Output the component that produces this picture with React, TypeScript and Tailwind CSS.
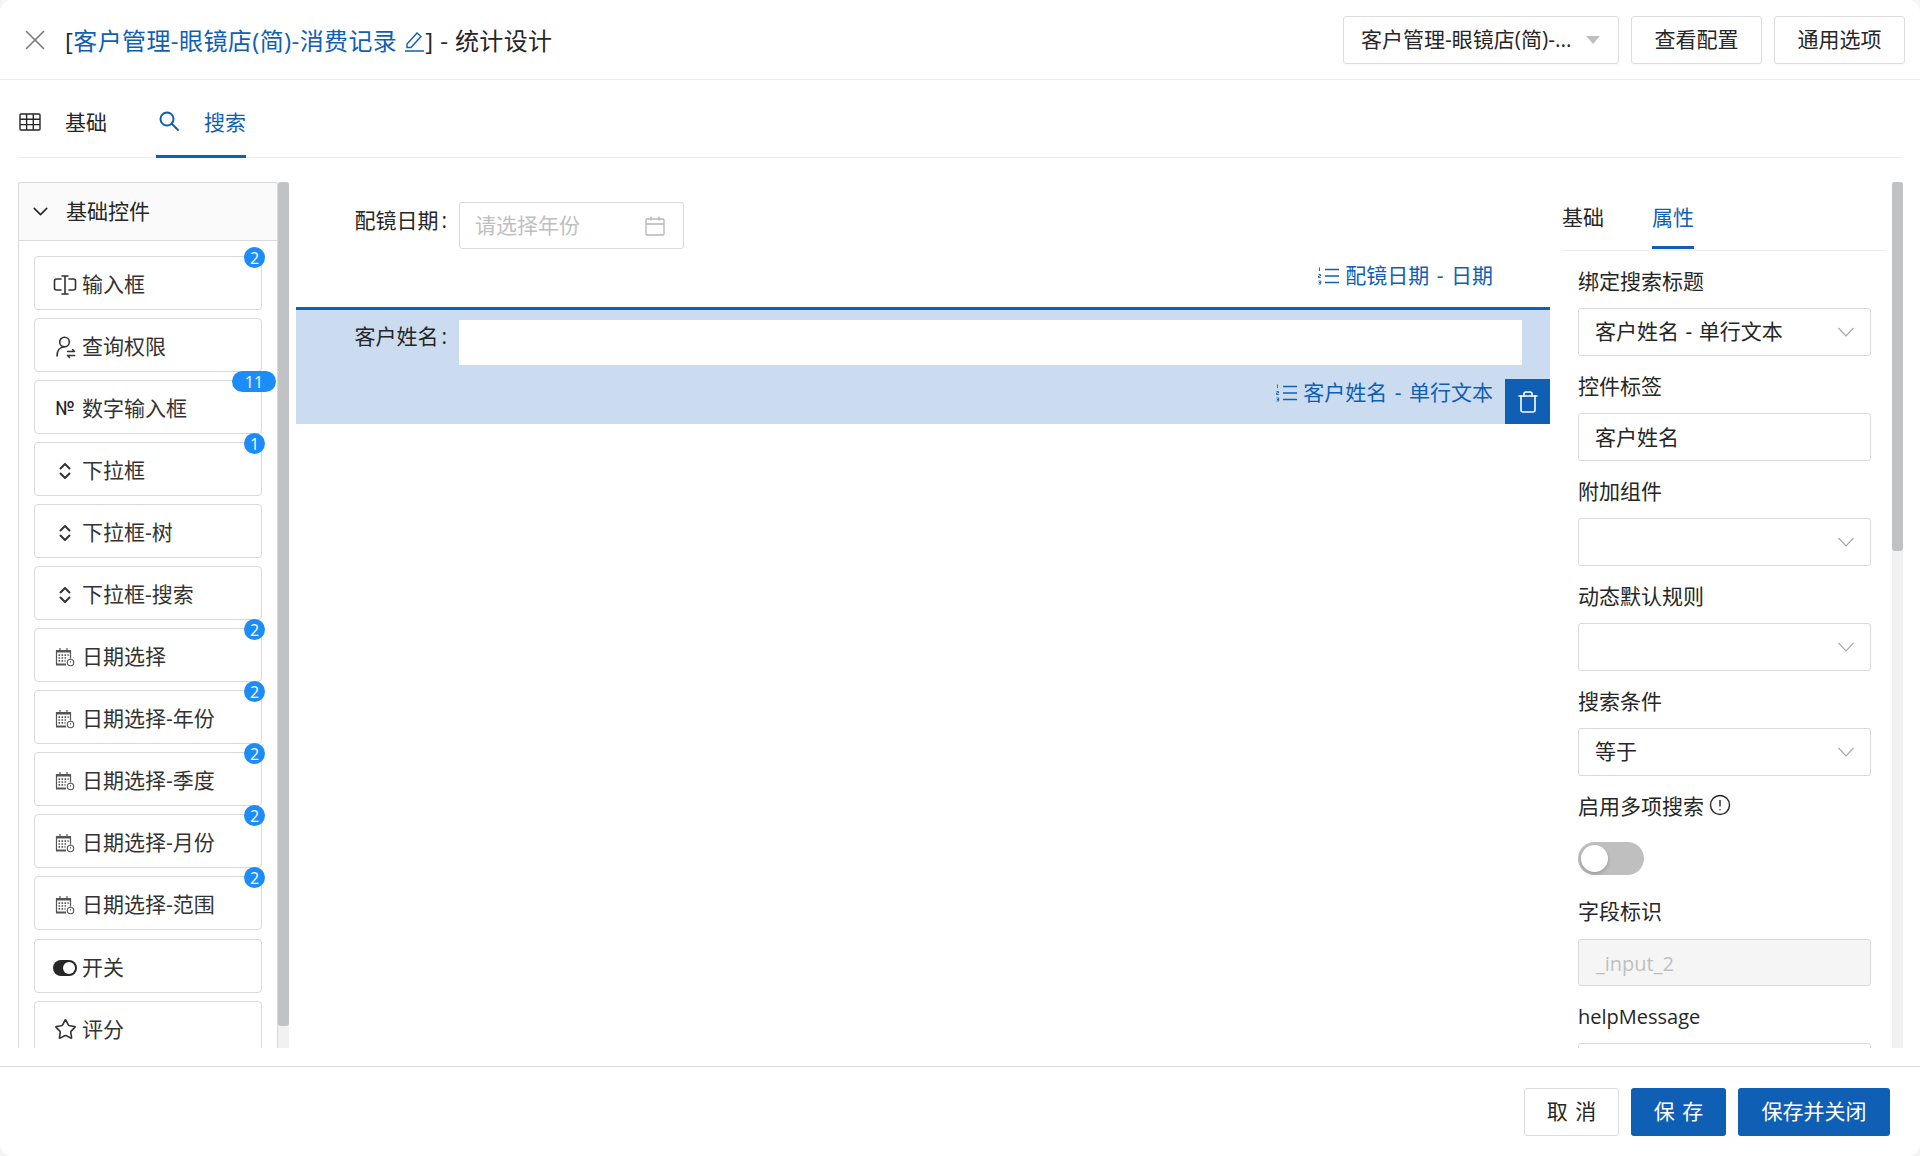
import React from "react";
import { ChevronDown, X, Star, Trash } from "lucide-react";

const Ic = ({ children, w = 24 }: { children: React.ReactNode; w?: number }) => (
  <svg width={w} height={24} viewBox="0 0 24 24" fill="none" stroke="currentColor" strokeWidth="1.6" strokeLinecap="round" strokeLinejoin="round">
    {children}
  </svg>
);

const InputIcon = () => (
  <Ic>
    <path d="M8 6H3.500a2 2 0 0 0-2 2v7a2 2 0 0 0 2 2H8" />
    <path d="M16 6h4.500a2 2 0 0 1 2 2v7a2 2 0 0 1-2 2H16" />
    <path d="M9 3h6M12 3v18M9 21h6" />
  </Ic>
);
const UserIcon = () => (
  <Ic>
    <circle cx="11.500" cy="7" r="4.800" />
    <path d="M4 21c0-5 2.500-9 7.500-9.300" />
    <path d="M14.500 16.500h7l-2-2M21.500 20.500h-7l2 2" strokeWidth="1.500" />
  </Ic>
);
const NoIcon = () => (
  <span className="w-[24px] text-center text-[18px] font-medium leading-[24px] text-[#262626] font-['Inter',sans-serif]">№</span>
);
const SortIcon = () => (
  <Ic>
    <path d="M7.500 9.500L12 5l4.500 4.500M7.500 14.500L12 19l4.500-4.500" strokeWidth="2" />
  </Ic>
);
const DateIcon = () => (
  <svg width={24} height={24} viewBox="0 0 24 24" fill="none" stroke="#555" strokeWidth="1.2">
    <path d="M3.500 19.500V5.500h14v8" />
    <path d="M3 5h15v2.500H3z" fill="#555" stroke="none" />
    <path d="M7 3v3M14 3v3" />
    <path d="M3 19.500h10" strokeWidth="2" />
    <path d="M5.500 10.200h1.600M8.500 10.200h1.600M11.500 10.200h1.600M14.500 10.200h1.200M5.500 13h1.600M8.500 13h1.600M11.500 13h1.600M5.500 15.800h1.600M8.500 15.800h1.600M11.500 15.800h1" strokeWidth="1.700" />
    <circle cx="17.500" cy="17.500" r="3.200" strokeWidth="1.100" fill="#fff" />
    <path d="M17.500 16v1.700" strokeWidth="0.900" />
  </svg>
);
const SwitchIcon = () => (
  <svg width={24} height={24} viewBox="0 0 24 24">
    <rect x="0" y="4" width="24" height="16" rx="8" fill="#262626" />
    <circle cx="16" cy="12" r="6" fill="#fff" />
  </svg>
);

type Item = { label: string; icon: React.ReactNode; badge?: string };
const items: Item[] = [
  { label: "输入框", icon: <InputIcon />, badge: "2" },
  { label: "查询权限", icon: <UserIcon /> },
  { label: "数字输入框", icon: <NoIcon />, badge: "11" },
  { label: "下拉框", icon: <SortIcon />, badge: "1" },
  { label: "下拉框-树", icon: <SortIcon /> },
  { label: "下拉框-搜索", icon: <SortIcon /> },
  { label: "日期选择", icon: <DateIcon />, badge: "2" },
  { label: "日期选择-年份", icon: <DateIcon />, badge: "2" },
  { label: "日期选择-季度", icon: <DateIcon />, badge: "2" },
  { label: "日期选择-月份", icon: <DateIcon />, badge: "2" },
  { label: "日期选择-范围", icon: <DateIcon />, badge: "2" },
  { label: "开关", icon: <SwitchIcon /> },
  { label: "评分", icon: <Star size={23} strokeWidth={1.7} /> },
];

const ListIcon = () => (
  <svg width={24} height={24} viewBox="0 0 24 24" fill="none" stroke="currentColor">
    <path d="M8 5.500h14M8 12h14M8 18.500h14" strokeWidth="1.600" />
    <path d="M2.500 3.500v3.500M1.500 10.500h2v1.500h-2v1.500h2.200M1.500 17h2.200v1.500H2h1.700V20H1.500" strokeWidth="0.900" />
  </svg>
);

const Label = ({ children }: { children: React.ReactNode }) => (
  <div className="flex h-[57px] items-center pt-[5px] text-[#262626]">{children}</div>
);
const Chevron = () => (
  <svg width={18} height={12} viewBox="0 0 18 12" fill="none" stroke="#a6a6a6" strokeWidth="1.100">
    <path d="M1.500 2l7.500 8 7.500-8" />
  </svg>
);
const SelectBox = ({ value }: { value?: string }) => (
  <div className="flex h-[48px] items-center justify-between rounded-[3px] border border-[#d9d9d9] pl-[16px] pr-[15px]">
    <span className="[word-spacing:1px]">{value}</span>
    <Chevron />
  </div>
);

export default function App() {
  return (
    <div className="flex h-[1156px] w-[1920px] flex-col overflow-hidden bg-[#f5f5f5] text-[21px] text-[#262626] font-['Open_Sans','Noto_Sans_CJK_SC',sans-serif]">
      <div className="flex h-full flex-col rounded-[12px] bg-white">
        <header className="flex h-[80px] shrink-0 items-center justify-between border-b border-[#eeeeee] pl-[18px] pr-[15px]">
          <div className="flex items-center pt-[2px] text-[24px] leading-[32px] tracking-[0.4px]">
            <X size={34} strokeWidth={1.1} className="mr-[13px] -mt-[2px] text-[#777]" />
            <span>[</span>
            <span className="text-[#0f5fb5]">客户管理-眼镜店(简)-消费记录</span>
            <svg width={24} height={24} viewBox="0 0 24 24" fill="none" stroke="#0f5fb5" strokeWidth="1.400" className="ml-[5px]">
              <path d="M5 15L15 4l4 3.500L9 18.500H5zM3 22h19" />
            </svg>
            <span className="-ml-[1px]">] - 统计设计</span>
          </div>
          <div className="flex items-center gap-[12px]">
            <div className="flex h-[48px] w-[276px] items-center justify-between rounded-[3px] border border-[#dddddd] pl-[17px] pr-[18px] shadow-[0_2px_0_rgba(0,0,0,0.015)]">
              <span className="pt-[1px]">客户管理-眼镜店(简)-...</span>
              <span className="h-0 w-0 border-x-[7px] border-t-[8px] border-x-transparent border-t-[#bfbfbf]" />
            </div>
            <button className="h-[48px] w-[131px] rounded-[3px] border border-[#dddddd] pt-[1px] shadow-[0_2px_0_rgba(0,0,0,0.015)]">查看配置</button>
            <button className="h-[48px] w-[131px] rounded-[3px] border border-[#dddddd] pt-[1px] shadow-[0_2px_0_rgba(0,0,0,0.015)]">通用选项</button>
          </div>
        </header>

        <div className="mx-[18px] flex h-[78px] shrink-0 items-center gap-[49px] border-b border-[#eeeeee]">
          <div className="flex h-full items-center gap-[24px] pl-[1px] pt-[9px]">
            <svg width={22} height={22} viewBox="0 0 22 22" fill="none" stroke="#262626" strokeWidth="1.400" className="-mt-[3px]">
              <rect x="1" y="3" width="20" height="16" rx="1" />
              <path d="M1 8.300h20M1 13.600h20M7.600 3v16M14.300 3v16" />
            </svg>
            <span>基础</span>
          </div>
          <div className="relative flex h-full items-center gap-[24px] pl-[2px] pt-[9px] text-[#0f5fb5]">
            <svg width={22} height={22} viewBox="0 0 22 22" fill="none" stroke="currentColor" strokeWidth="2" strokeLinecap="round" className="-mt-[5px]">
              <circle cx="9" cy="9" r="6.500" />
              <path d="M14 14l6 6" />
            </svg>
            <span>搜索</span>
            <div className="absolute bottom-[-1px] left-0 right-0 h-[3px] bg-[#0f5fb5]" />
          </div>
        </div>

        <main className="ml-[18px] mt-[24px] flex h-[866px] shrink-0 overflow-hidden">
          <aside className="flex h-full w-[271px] shrink-0">
            <div className="h-full w-[260px] shrink-0 overflow-hidden rounded-t-[3px] border-x border-t border-[#d9d9d9]">
              <div className="flex h-[58px] items-center border-b border-[#d9d9d9] bg-[#fafafa] pl-[9px]">
                <ChevronDown size={25} strokeWidth={1.500} className="mr-[13px]" />
                <span>基础控件</span>
              </div>
              <div className="flex flex-col gap-[8px] pl-[15px] pt-[15px]">
                {items.map((it) => (
                  <div key={it.label} className={`relative flex h-[54px] w-[228px] shrink-0 items-center rounded-[4px] border border-[#d9d9d9] pl-[18px] pt-[3px] text-[#333] ${it.label === "开关" ? "mt-[1px]" : ""}`}>
                    <span className="mr-[5px] flex w-[24px] justify-center">{it.icon}</span>
                    <span className="pt-[1px]">{it.label}</span>
                    {it.badge && (
                      <span className={`absolute top-[-10px] flex h-[21px] items-center justify-center rounded-full bg-[#1b8cf8] text-[16px] text-white ${it.badge.length > 1 ? "right-[-15px] w-[44px]" : "right-[-4px] w-[21px]"}`}>
                        {it.badge}
                      </span>
                    )}
                  </div>
                ))}
              </div>
            </div>
            <div className="h-full w-[11px] bg-[#f1f1f1]">
              <div className="h-[844px] rounded-[3px] bg-[#c1c2c4]" />
            </div>
          </aside>

          <section className="ml-[7px] flex h-full w-[1254px] shrink-0 flex-col">
            <div className="h-[125px] shrink-0">
              <div className="flex pt-[20px]">
                <div className="flex h-[47px] w-[163px] items-center justify-end pr-[12px] pb-[10px]">配镜日期<span className="ml-[3px]">:</span></div>
                <div className="flex h-[47px] w-[225px] items-center justify-between rounded-[3px] border border-[#d9d9d9] pl-[15px] pr-[17px] text-[#bfbfbf]">
                  <span className="pt-[1px]">请选择年份</span>
                  <svg width={22} height={22} viewBox="0 0 22 22" fill="none" stroke="#b5b5b5" strokeWidth="1.300">
                    <rect x="2" y="4" width="18" height="16" rx="1" />
                    <path d="M2 9h18M7 1.500v4M15 1.500v4" />
                  </svg>
                </div>
              </div>
              <div className="mt-[11px] flex items-center justify-end gap-[4px] pr-[57px] text-[#0f5fb5] [word-spacing:2px]">
                <ListIcon />
                <span>配镜日期 - 日期</span>
              </div>
            </div>
            <div className="relative h-[117px] shrink-0 border-t-[3px] border-[#0f5fb5] bg-[#cbdcf0]">
              <div className="flex pt-[10px]">
                <div className="flex h-[45px] w-[163px] items-center justify-end pr-[12px] pb-[11px]">客户姓名<span className="ml-[3px]">:</span></div>
                <div className="h-[45px] w-[1063px] bg-white" />
              </div>
              <div className="mt-[12px] flex items-center justify-end gap-[4px] pr-[57px] text-[#0f5fb5] [word-spacing:2px]">
                <ListIcon />
                <span>客户姓名 - 单行文本</span>
              </div>
              <div className="absolute bottom-0 right-0 flex h-[45px] w-[45px] items-center justify-center bg-[#0f5fb5] text-white">
                <Trash size={24} strokeWidth={1.600} />
              </div>
            </div>
          </section>

          <section className="flex h-full w-[353px] shrink-0">
            <div className="ml-[12px] w-[323px] shrink-0">
              <div className="flex h-[69px] items-center gap-[48px] border-b border-[#eeeeee] pt-[3px]">
                <span className="text-[#262626]">基础</span>
                <span className="relative text-[#0f5fb5]">
                  属性
                  <span className="absolute left-0 right-0 top-[44px] h-[3px] bg-[#0f5fb5]" />
                </span>
              </div>
              <div className="pl-[16px] pr-[14px]">
                <Label>绑定搜索标题</Label>
                <SelectBox value="客户姓名 - 单行文本" />
                <Label>控件标签</Label>
                <div className="flex h-[48px] items-center rounded-[3px] border border-[#d9d9d9] pl-[16px] pt-[2px]">客户姓名</div>
                <Label>附加组件</Label>
                <SelectBox />
                <Label>动态默认规则</Label>
                <SelectBox />
                <Label>搜索条件</Label>
                <SelectBox value="等于" />
                <Label>
                  启用多项搜索
                  <svg width={22} height={22} viewBox="0 0 22 22" fill="none" stroke="#262626" strokeWidth="1.400" className="ml-[5px] -mt-[4px]">
                    <circle cx="11" cy="11" r="9.500" />
                    <path d="M11 6v6.500M11 15.200v1" />
                  </svg>
                </Label>
                <div className="h-[48px] pt-[9px]">
                  <div className="flex h-[33px] w-[66px] items-center rounded-full bg-[#bfbfbf] pl-[3px]">
                    <div className="h-[27px] w-[27px] rounded-full bg-white shadow-[0_2px_4px_rgba(0,0,0,0.2)]" />
                  </div>
                </div>
                <Label>字段标识</Label>
                <div className="mt-[1px] flex h-[47px] items-center rounded-[3px] border border-[#d9d9d9] bg-[#f5f5f5] pl-[17px] pt-[2px] text-[20px] text-[#bfbfbf]">_input_2</div>
                <Label><span className="text-[20px]">helpMessage</span></Label>
                <div className="h-[48px] rounded-[3px] border border-[#d9d9d9]" />
              </div>
            </div>
            <div className="ml-[7px] h-full w-[11px] shrink-0 bg-[#f1f1f1]">
              <div className="h-[369px] rounded-[3px] bg-[#c1c2c4]" />
            </div>
          </section>
        </main>

        <footer className="mt-[18px] flex h-[90px] shrink-0 items-start justify-end gap-[12px] border-t border-[#dddddd] pr-[30px] pt-[21px]">
          <button className="h-[48px] w-[95px] rounded-[3px] border border-[#dddddd] [word-spacing:2px]">取 消</button>
          <button className="h-[48px] w-[95px] rounded-[3px] bg-[#0f5fb5] text-white [word-spacing:2px]">保 存</button>
          <button className="h-[48px] w-[152px] rounded-[3px] bg-[#0f5fb5] text-white">保存并关闭</button>
        </footer>
      </div>
    </div>
  );
}
